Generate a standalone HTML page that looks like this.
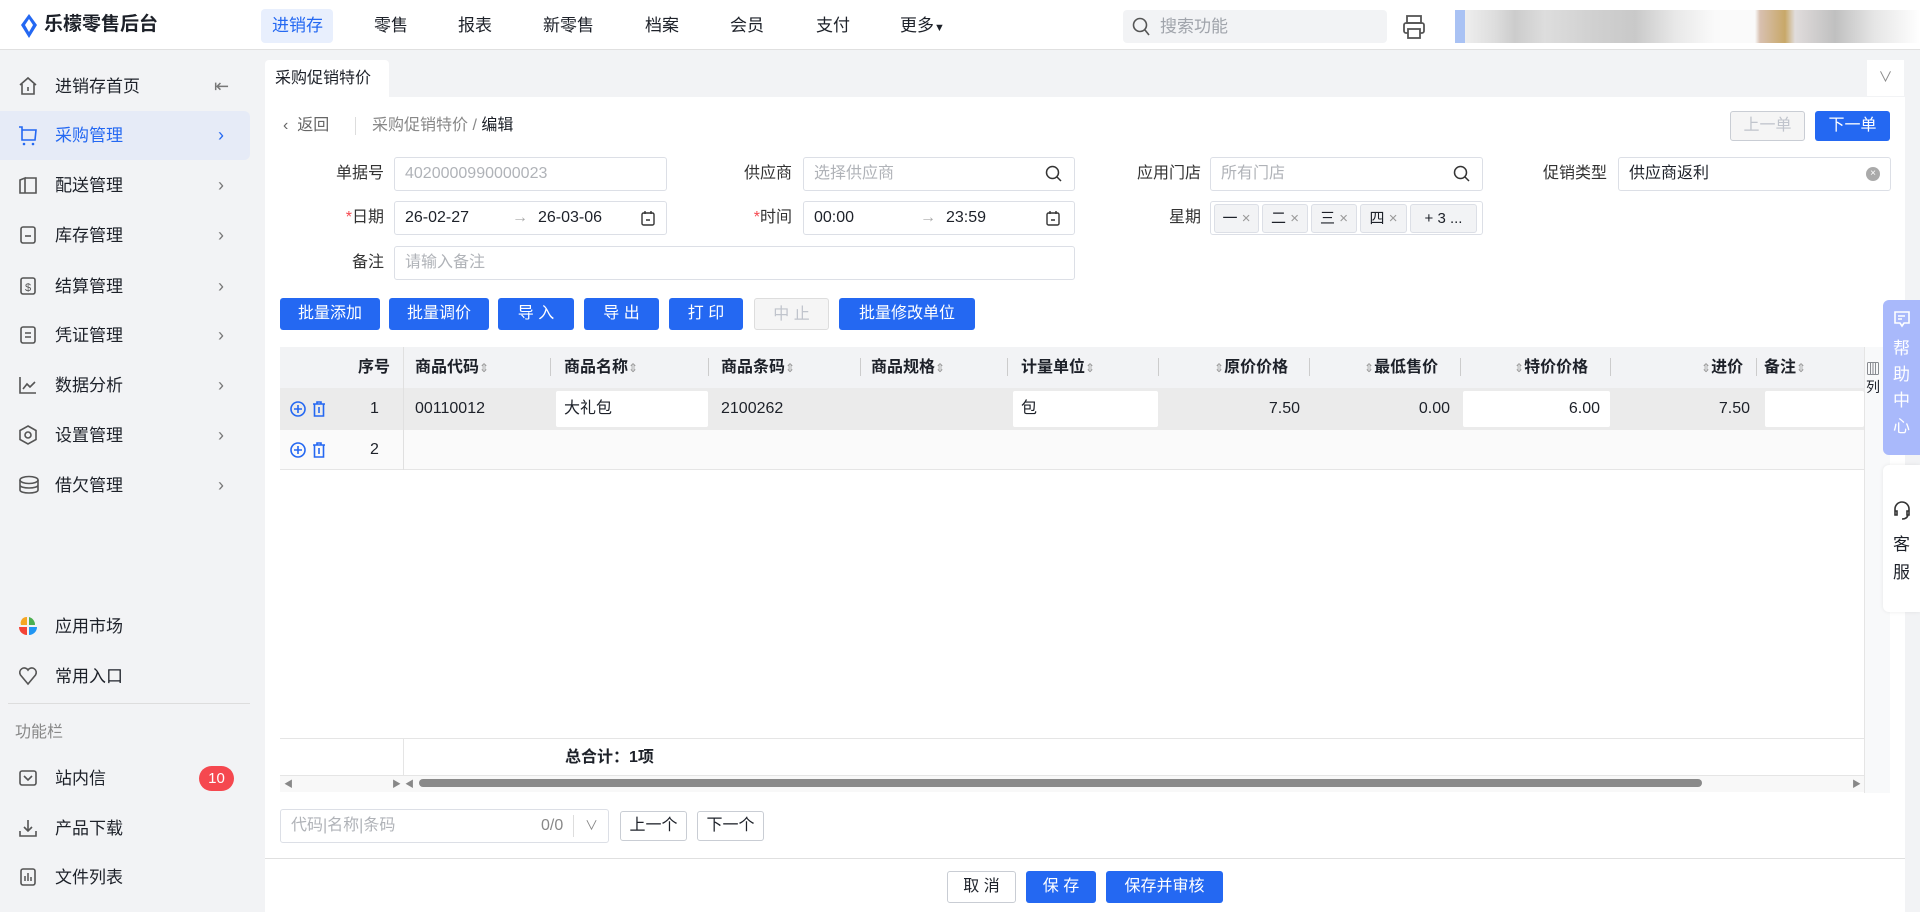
<!DOCTYPE html>
<html><head><meta charset="utf-8">
<style>
*{box-sizing:border-box;margin:0;padding:0}
body{width:1920px;height:912px;overflow:hidden;background:#f2f3f5;font-family:"Liberation Sans","Noto Sans CJK SC",sans-serif;color:#1d2129;font-size:16px;position:relative}
.a{position:absolute}
.hdr{left:0;top:0;width:1920px;height:50px;background:#fff;border-bottom:1px solid #e0e0e0}
.nav{top:9px;height:34px;line-height:34px;font-size:17px;color:#1d2129}
.side{left:0;top:51px;width:265px;height:861px;background:#f2f3f5}
.si{left:0;width:250px;height:49px;line-height:49px;font-size:17px;color:#1d2129}
.si .t{position:absolute;left:55px}
.si .c{position:absolute;left:218px;color:#777;font-size:18px}
.si svg{position:absolute;left:18px;top:14px}
.main{left:265px;top:97px;width:1640px;height:815px;background:#fff}
.lbl{font-size:16px;color:#333;text-align:right;width:100px;height:34px;line-height:34px}
.inp{height:34px;border:1px solid #dcdfe6;border-radius:3px;background:#fff;line-height:32px;padding-left:10px;font-size:16px;color:#1d2129}
.ph{color:#b0b3b8}
.btn{height:32px;line-height:32px;background:#2468f2;color:#fff;text-align:center;border-radius:3px;font-size:16px}
.th{top:347px;height:41px;line-height:41px;font-weight:bold;font-size:16px;color:#1d2129}
.sep{top:358px;width:1px;height:18px;background:#ccc}
.td{line-height:42px;height:42px;font-size:16px}
.cell{background:#fff;border-radius:2px;height:36px;top:391px}
.wbtn{height:30px;line-height:28px;border:1px solid #c9cdd4;border-radius:3px;background:#fff;text-align:center;font-size:16px}
.tag{top:204px;height:29px;line-height:27px;border:1px solid #dcdfe6;background:#f2f3f5;border-radius:3px;font-size:15px;text-align:center}
</style></head><body>
<div class="a hdr"></div>
<svg class="a" style="left:20px;top:13px" width="18" height="26" viewBox="0 0 18 26"><path d="M9 1 L17 12 L9 25 L1 12 Z" fill="#2468f2"/><path d="M9 6 L13 12 L9 19 L5 12Z" fill="#fff"/></svg>
<div class="a" style="left:44px;top:12px;font-size:19px;font-weight:bold;line-height:26px">乐檬零售后台</div>
<div class="a" style="left:261px;top:9px;width:72px;height:34px;background:#e8effd;border-radius:4px"></div>
<div class="a nav" style="left:272px;color:#2468f2">进销存</div>
<div class="a nav" style="left:374px">零售</div>
<div class="a nav" style="left:458px">报表</div>
<div class="a nav" style="left:543px">新零售</div>
<div class="a nav" style="left:645px">档案</div>
<div class="a nav" style="left:730px">会员</div>
<div class="a nav" style="left:816px">支付</div>
<div class="a nav" style="left:900px">更多<span style="font-size:11px">▼</span></div>
<div class="a" style="left:1123px;top:10px;width:264px;height:33px;background:#f2f3f5;border-radius:4px"></div>
<svg class="a" style="left:1132px;top:17px" width="18" height="20" viewBox="0 0 18 20"><circle cx="8" cy="8" r="6.5" fill="none" stroke="#555" stroke-width="1.6"/><path d="M13 13 L17 18" stroke="#555" stroke-width="1.6"/></svg>
<div class="a" style="left:1160px;top:10px;line-height:33px;font-size:17px;color:#a0a4ab">搜索功能</div>
<svg class="a" style="left:1402px;top:14px" width="24" height="26" viewBox="0 0 24 26"><rect x="5" y="2" width="14" height="7" fill="none" stroke="#555" stroke-width="1.8"/><rect x="2" y="9" width="20" height="10" rx="2" fill="none" stroke="#555" stroke-width="1.8"/><rect x="6" y="15" width="12" height="9" fill="#fff" stroke="#555" stroke-width="1.8"/></svg>
<div class="a" style="left:1455px;top:10px;width:465px;height:33px;background:linear-gradient(90deg,#a9c2f4 0,#a9c2f4 10px,#eee 10px,#ddd 40px,#ccc 60px,#ddd 90px,#d0d0d0 140px,#c9c9c9 180px,#e8e8e8 220px,#fafafa 260px,#fafafa 300px,#d8c0b0 305px,#c8a868 330px,#e0dcdc 340px,#c0c0c0 380px,#e6e6e6 420px,#fff 465px)"></div>

<div class="a side"></div>
<div class="a" style="left:0;top:111px;width:250px;height:49px;background:#e6ebf7;border-radius:0 6px 6px 0"></div>
<div class="a si" style="top:62px"><svg width="20" height="20" viewBox="0 0 20 20"><path d="M2 9 L10 2 L18 9 M4 8 V18 H16 V8 M10 11 V15" fill="none" stroke="#555" stroke-width="1.6"/></svg><span class="t">进销存首页</span><span class="c" style="left:214px">⇤</span></div>
<div class="a si" style="top:111px;color:#2468f2"><svg width="20" height="22" viewBox="0 0 20 22"><path d="M1 2 H4 V15 H17 L18 5 H4" fill="none" stroke="#2468f2" stroke-width="1.6"/><circle cx="6" cy="19" r="1.3" fill="#2468f2"/><circle cx="15" cy="19" r="1.3" fill="#2468f2"/></svg><span class="t">采购管理</span><span class="c" style="color:#2468f2">›</span></div>
<div class="a si" style="top:161px"><svg width="20" height="20" viewBox="0 0 20 20"><path d="M2 5 L7 3 V18 L2 18Z M7 3 H18 V18 H7" fill="none" stroke="#555" stroke-width="1.6"/></svg><span class="t">配送管理</span><span class="c">›</span></div>
<div class="a si" style="top:211px"><svg width="20" height="20" viewBox="0 0 20 20"><rect x="3" y="2" width="14" height="16" rx="2" fill="none" stroke="#555" stroke-width="1.6"/><path d="M7 11 H13" stroke="#555" stroke-width="1.6"/></svg><span class="t">库存管理</span><span class="c">›</span></div>
<div class="a si" style="top:262px"><svg width="20" height="20" viewBox="0 0 20 20"><rect x="3" y="2" width="14" height="16" rx="2" fill="none" stroke="#555" stroke-width="1.6"/><text x="10" y="15" font-size="11" text-anchor="middle" fill="#555">$</text></svg><span class="t">结算管理</span><span class="c">›</span></div>
<div class="a si" style="top:311px"><svg width="20" height="20" viewBox="0 0 20 20"><rect x="3" y="2" width="14" height="16" rx="2" fill="none" stroke="#555" stroke-width="1.6"/><path d="M7 8 H13 M7 12 H13" stroke="#555" stroke-width="1.6"/></svg><span class="t">凭证管理</span><span class="c">›</span></div>
<div class="a si" style="top:361px"><svg width="20" height="20" viewBox="0 0 20 20"><path d="M2 2 V18 H18 M5 14 L9 9 L12 12 L17 7" fill="none" stroke="#555" stroke-width="1.6"/></svg><span class="t">数据分析</span><span class="c">›</span></div>
<div class="a si" style="top:411px"><svg width="20" height="20" viewBox="0 0 20 20"><path d="M10 1 L18 5.5 V14.5 L10 19 L2 14.5 V5.5Z" fill="none" stroke="#555" stroke-width="1.6"/><circle cx="10" cy="10" r="3" fill="none" stroke="#555" stroke-width="1.6"/></svg><span class="t">设置管理</span><span class="c">›</span></div>
<div class="a si" style="top:461px"><svg width="22" height="20" viewBox="0 0 22 20"><ellipse cx="11" cy="5" rx="9" ry="3.5" fill="none" stroke="#555" stroke-width="1.6"/><path d="M2 5 V15 C2 19 20 19 20 15 V5 M2 10 C2 14 20 14 20 10" fill="none" stroke="#555" stroke-width="1.6"/></svg><span class="t">借欠管理</span><span class="c">›</span></div>
<div class="a si" style="top:602px"><svg width="20" height="20" viewBox="0 0 20 20"><path d="M9 1 V9 H3 A6 6 0 0 1 9 1Z" fill="#f5a623"/><path d="M11 1 V9 H17 A8 8 0 0 0 11 1Z" fill="#4caf50"/><path d="M9 11 V19 A8 8 0 0 1 1 11Z" fill="#f44336"/><path d="M11 11 H19 A8 8 0 0 1 11 19Z" fill="#2196f3"/></svg><span class="t">应用市场</span></div>
<div class="a si" style="top:652px"><svg width="20" height="20" viewBox="0 0 20 20"><path d="M10 18 L2.5 9 A4.5 4.5 0 0 1 10 4 A4.5 4.5 0 0 1 17.5 9Z" fill="none" stroke="#555" stroke-width="1.6"/></svg><span class="t">常用入口</span></div>
<div class="a" style="left:8px;top:703px;width:242px;height:1px;background:#ddd"></div>
<div class="a" style="left:15px;top:718px;font-size:16px;color:#888">功能栏</div>
<div class="a si" style="top:754px"><svg width="20" height="20" viewBox="0 0 20 20"><rect x="2" y="3" width="16" height="14" rx="2" fill="none" stroke="#555" stroke-width="1.6"/><path d="M6 8 L10 12 L14 8" fill="none" stroke="#555" stroke-width="1.6"/></svg><span class="t">站内信</span></div>
<div class="a" style="left:199px;top:766px;width:35px;height:25px;border-radius:13px;background:#f5484f;color:#fff;text-align:center;line-height:25px;font-size:15px">10</div>
<div class="a si" style="top:804px"><svg width="20" height="20" viewBox="0 0 20 20"><path d="M10 2 V13 M6 9 L10 13 L14 9 M2 13 V18 H18 V13" fill="none" stroke="#555" stroke-width="1.6"/></svg><span class="t">产品下载</span></div>
<div class="a si" style="top:853px"><svg width="20" height="20" viewBox="0 0 20 20"><rect x="3" y="2" width="14" height="16" rx="2" fill="none" stroke="#555" stroke-width="1.6"/><path d="M7 14 V9 M10 14 V6 M13 14 V10" stroke="#555" stroke-width="1.5"/></svg><span class="t">文件列表</span></div>

<div class="a" style="left:265px;top:60px;width:124px;height:37px;background:#fff;border-radius:4px 4px 0 0;line-height:37px;padding-left:10px;font-size:16px">采购促销特价</div>
<div class="a" style="left:1867px;top:60px;width:37px;height:36px;background:#fff;text-align:center;line-height:34px;color:#888;font-size:14px">∨</div>
<div class="a main"></div>

<div class="a" style="left:283px;top:114px;line-height:24px;font-size:16px;color:#666">‹&nbsp;&nbsp;返回</div>
<div class="a" style="left:355px;top:117px;width:1px;height:18px;background:#ddd"></div>
<div class="a" style="left:372px;top:114px;line-height:24px;font-size:16px;color:#888">采购促销特价 / <span style="color:#1d2129">编辑</span></div>
<div class="a wbtn" style="left:1730px;top:111px;width:75px;color:#c0c4cc;background:#f5f5f5">上一单</div>
<div class="a btn" style="left:1815px;top:111px;width:75px;height:30px;line-height:30px">下一单</div>

<div class="a lbl" style="left:284px;top:157px">单据号</div>
<div class="a inp ph" style="left:394px;top:157px;width:273px">4020000990000023</div>
<div class="a lbl" style="left:692px;top:157px">供应商</div>
<div class="a inp ph" style="left:803px;top:157px;width:272px">选择供应商</div>
<div class="a lbl" style="left:1101px;top:157px">应用门店</div>
<div class="a inp ph" style="left:1210px;top:157px;width:273px">所有门店</div>
<div class="a lbl" style="left:1507px;top:157px">促销类型</div>
<div class="a inp" style="left:1618px;top:157px;width:273px">供应商返利</div>
<svg class="a" style="left:1045px;top:165px" width="18" height="18" viewBox="0 0 18 18"><circle cx="7.5" cy="7.5" r="6" fill="none" stroke="#333" stroke-width="1.5"/><path d="M12 12 L16 16" stroke="#333" stroke-width="1.5"/></svg>
<svg class="a" style="left:1453px;top:165px" width="18" height="18" viewBox="0 0 18 18"><circle cx="7.5" cy="7.5" r="6" fill="none" stroke="#333" stroke-width="1.5"/><path d="M12 12 L16 16" stroke="#333" stroke-width="1.5"/></svg>
<div class="a" style="left:1866px;top:167px;width:14px;height:14px;border-radius:7px;background:#aaa;color:#fff;font-size:10px;line-height:14px;text-align:center">×</div>

<div class="a lbl" style="left:284px;top:201px"><span style="color:#f5484f">*</span>日期</div>
<div class="a inp" style="left:394px;top:201px;width:273px">26-02-27</div>
<div class="a" style="left:512px;top:201px;line-height:34px;color:#aaa">→</div>
<div class="a" style="left:538px;top:201px;line-height:34px">26-03-06</div>
<svg class="a" style="left:640px;top:210px" width="16" height="16" viewBox="0 0 16 16"><rect x="2" y="3" width="12" height="12" rx="1.5" fill="none" stroke="#333" stroke-width="1.4"/><path d="M5 1 V4 M11 1 V4 M6 10 H10" stroke="#333" stroke-width="1.4"/></svg>
<div class="a lbl" style="left:692px;top:201px"><span style="color:#f5484f">*</span>时间</div>
<div class="a inp" style="left:803px;top:201px;width:272px">00:00</div>
<div class="a" style="left:920px;top:201px;line-height:34px;color:#aaa">→</div>
<div class="a" style="left:946px;top:201px;line-height:34px">23:59</div>
<svg class="a" style="left:1045px;top:210px" width="16" height="16" viewBox="0 0 16 16"><rect x="2" y="3" width="12" height="12" rx="1.5" fill="none" stroke="#333" stroke-width="1.4"/><path d="M5 1 V4 M11 1 V4 M6 10 H10" stroke="#333" stroke-width="1.4"/></svg>
<div class="a lbl" style="left:1101px;top:201px">星期</div>
<div class="a inp" style="left:1210px;top:201px;width:273px"></div>
<div class="a tag" style="left:1214px;width:45px">一 <span style="color:#999">×</span></div>
<div class="a tag" style="left:1262px;width:46px">二 <span style="color:#999">×</span></div>
<div class="a tag" style="left:1311px;width:46px">三 <span style="color:#999">×</span></div>
<div class="a tag" style="left:1360px;width:47px">四 <span style="color:#999">×</span></div>
<div class="a tag" style="left:1410px;width:67px">+ 3 ...</div>

<div class="a lbl" style="left:284px;top:246px">备注</div>
<div class="a inp ph" style="left:394px;top:246px;width:681px">请输入备注</div>

<div class="a btn" style="left:280px;top:298px;width:100px">批量添加</div>
<div class="a btn" style="left:389px;top:298px;width:100px">批量调价</div>
<div class="a btn" style="left:498px;top:298px;width:76px">导 入</div>
<div class="a btn" style="left:584px;top:298px;width:75px">导 出</div>
<div class="a btn" style="left:669px;top:298px;width:74px">打 印</div>
<div class="a btn" style="left:754px;top:298px;width:75px;background:#f5f5f5;color:#c0c4cc;border:1px solid #ddd">中 止</div>
<div class="a btn" style="left:839px;top:298px;width:136px">批量修改单位</div>

<div class="a" style="left:280px;top:347px;width:1584px;height:41px;background:#f2f3f5"></div>
<div class="a" style="left:280px;top:388px;width:1584px;height:42px;background:#ebebeb"></div>
<div class="a" style="left:280px;top:430px;width:1584px;height:40px;background:#fafafa;border-bottom:1px solid #e5e5e5"></div>
<div class="a" style="left:403px;top:347px;width:1px;height:123px;background:#e0e0e0"></div>
<div class="a" style="left:1864px;top:347px;width:26px;height:446px;background:#f8f9fa;border-left:1px solid #e5e5e5"></div>
<div class="a" style="left:1866px;top:360px;font-size:14px;line-height:18px">▥<br>列</div>

<div class="a th" style="left:358px">序号</div>
<div class="a th" style="left:415px">商品代码<span style="color:#999;font-weight:normal;font-size:12px">⇕</span></div>
<div class="a sep" style="left:550px"></div>
<div class="a th" style="left:564px">商品名称<span style="color:#999;font-weight:normal;font-size:12px">⇕</span></div>
<div class="a sep" style="left:708px"></div>
<div class="a th" style="left:721px">商品条码<span style="color:#999;font-weight:normal;font-size:12px">⇕</span></div>
<div class="a sep" style="left:860px"></div>
<div class="a th" style="left:871px">商品规格<span style="color:#999;font-weight:normal;font-size:12px">⇕</span></div>
<div class="a sep" style="left:1007px"></div>
<div class="a th" style="left:1021px">计量单位<span style="color:#999;font-weight:normal;font-size:12px">⇕</span></div>
<div class="a sep" style="left:1158px"></div>
<div class="a th" style="left:1214px"><span style="color:#999;font-weight:normal;font-size:12px">⇕</span>原价价格</div>
<div class="a sep" style="left:1309px"></div>
<div class="a th" style="left:1364px"><span style="color:#999;font-weight:normal;font-size:12px">⇕</span>最低售价</div>
<div class="a sep" style="left:1460px"></div>
<div class="a th" style="left:1514px"><span style="color:#999;font-weight:normal;font-size:12px">⇕</span>特价价格</div>
<div class="a sep" style="left:1610px"></div>
<div class="a th" style="left:1701px"><span style="color:#999;font-weight:normal;font-size:12px">⇕</span>进价</div>
<div class="a sep" style="left:1756px"></div>
<div class="a th" style="left:1764px">备注<span style="color:#999;font-weight:normal;font-size:12px">⇕</span></div>

<svg class="a" style="left:289px;top:399px" width="40" height="20" viewBox="0 0 40 20"><circle cx="9" cy="10" r="7" fill="none" stroke="#2468f2" stroke-width="1.6"/><path d="M9 6 V14 M5 10 H13" stroke="#2468f2" stroke-width="1.6"/><path d="M24 5 H36 M28 5 V3 H32 V5 M25.5 5 V17 H34.5 V5 M30 8 V14" fill="none" stroke="#2468f2" stroke-width="1.6"/></svg>
<svg class="a" style="left:289px;top:440px" width="40" height="20" viewBox="0 0 40 20"><circle cx="9" cy="10" r="7" fill="none" stroke="#2468f2" stroke-width="1.6"/><path d="M9 6 V14 M5 10 H13" stroke="#2468f2" stroke-width="1.6"/><path d="M24 5 H36 M28 5 V3 H32 V5 M25.5 5 V17 H34.5 V5 M30 8 V14" fill="none" stroke="#2468f2" stroke-width="1.6"/></svg>
<div class="a td" style="left:370px;top:388px">1</div>
<div class="a td" style="left:370px;top:430px;line-height:40px">2</div>
<div class="a td" style="left:415px;top:388px">00110012</div>
<div class="a cell" style="left:556px;width:152px"></div>
<div class="a td" style="left:564px;top:388px">大礼包</div>
<div class="a td" style="left:721px;top:388px">2100262</div>
<div class="a cell" style="left:1013px;width:145px"></div>
<div class="a td" style="left:1021px;top:388px">包</div>
<div class="a td" style="left:1200px;top:388px;width:100px;text-align:right">7.50</div>
<div class="a td" style="left:1350px;top:388px;width:100px;text-align:right">0.00</div>
<div class="a cell" style="left:1463px;width:147px"></div>
<div class="a td" style="left:1500px;top:388px;width:100px;text-align:right">6.00</div>
<div class="a td" style="left:1650px;top:388px;width:100px;text-align:right">7.50</div>
<div class="a cell" style="left:1765px;width:99px"></div>

<div class="a" style="left:280px;top:738px;width:1584px;height:1px;background:#e5e5e5"></div>
<div class="a" style="left:403px;top:738px;width:1px;height:54px;background:#e5e5e5"></div>
<div class="a" style="left:565px;top:740px;line-height:36px;font-weight:bold;font-size:16px">总合计：1项</div>
<div class="a" style="left:280px;top:775px;width:1584px;height:17px;background:#f8f8f8;border-top:1px solid #e5e5e5"></div>
<div class="a" style="left:419px;top:779px;width:1283px;height:8px;border-radius:4px;background:#8a8a8a"></div>
<div class="a" style="left:284px;top:777px;font-size:9px;color:#888">◀</div>
<div class="a" style="left:392px;top:777px;font-size:9px;color:#888">▶</div>
<div class="a" style="left:405px;top:777px;font-size:9px;color:#888">◀</div>
<div class="a" style="left:1852px;top:777px;font-size:9px;color:#888">▶</div>

<div class="a inp ph" style="left:280px;top:809px;width:329px;font-size:16px">代码|名称|条码</div>
<div class="a" style="left:541px;top:809px;line-height:34px;color:#888">0/0</div>
<div class="a" style="left:573px;top:815px;width:1px;height:22px;background:#ddd"></div>
<div class="a" style="left:585px;top:809px;line-height:34px;color:#888;font-size:13px">∨</div>
<div class="a wbtn" style="left:620px;top:811px;width:67px">上一个</div>
<div class="a wbtn" style="left:697px;top:811px;width:67px">下一个</div>

<div class="a" style="left:265px;top:858px;width:1640px;height:1px;background:#e0e0e0"></div>
<div class="a wbtn" style="left:947px;top:871px;width:69px;height:32px;line-height:30px">取 消</div>
<div class="a btn" style="left:1026px;top:871px;width:70px">保 存</div>
<div class="a btn" style="left:1106px;top:871px;width:117px">保存并审核</div>

<div class="a" style="left:1883px;top:300px;width:37px;height:155px;background:#a9b9fb;border-radius:6px 0 0 6px;color:#fff;text-align:center;font-size:17px;line-height:26px;padding-top:10px">
<svg width="18" height="18" viewBox="0 0 18 18"><path d="M2 2 H16 V13 H11 L9 16 L7 13 H2Z M5 6 H12 M5 9 H9" fill="none" stroke="#fff" stroke-width="1.6"/></svg><br>帮<br>助<br>中<br>心</div>
<div class="a" style="left:1883px;top:465px;width:37px;height:147px;background:#fff;border-radius:6px 0 0 6px;box-shadow:0 0 4px rgba(0,0,0,.08);text-align:center;font-size:17px;line-height:28px;padding-top:35px">
<svg width="20" height="22" viewBox="0 0 20 22"><path d="M3 12 V9 A7 7 0 0 1 17 9 V12 M3 11 H5 V15 H3Z M15 11 H17 V15 H15Z M16 15 Q15 19 10 19" fill="none" stroke="#333" stroke-width="1.6"/></svg><br>客<br>服</div>
</body></html>
